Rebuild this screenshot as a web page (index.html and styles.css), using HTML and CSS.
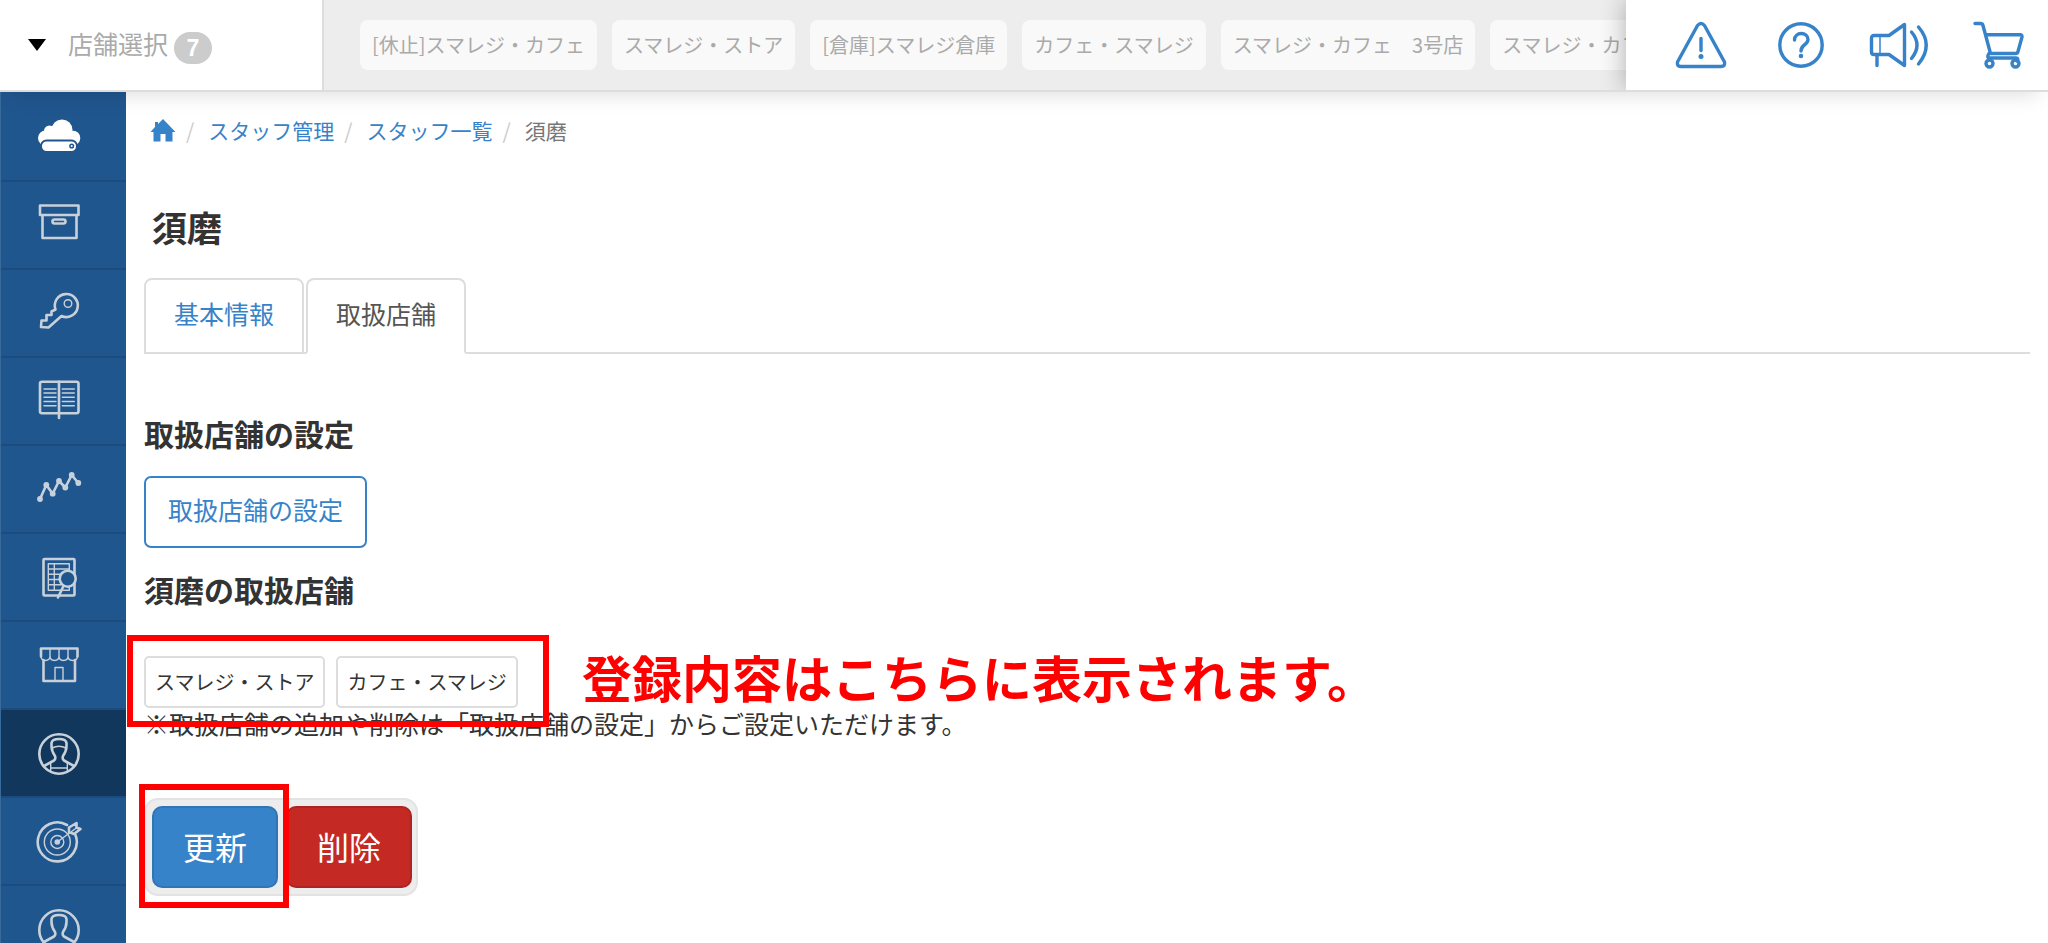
FILE: index.html
```html
<!DOCTYPE html>
<html lang="ja">
<head>
    <meta charset="UTF-8">
    <meta name="viewport" content="width=device-width, initial-scale=1.0">
    <title>須磨 - スタッフ管理</title>
    <link rel="stylesheet" href="styles.css">
</head>
<body>
    <header class="topbar">
        <button type="button" class="store-select">
            <span class="caret"></span>
            <span class="store-label">店舗選択</span>
            <span class="count">7</span>
        </button>
        <div class="store-strip">
            <span class="store-chip">[休止]スマレジ・カフェ</span>
            <span class="store-chip">スマレジ・ストア</span>
            <span class="store-chip">[倉庫]スマレジ倉庫</span>
            <span class="store-chip">カフェ・スマレジ</span>
            <span class="store-chip">スマレジ・カフェ　3号店</span>
            <span class="store-chip">スマレジ・カフェ</span>
        </div>
        <nav class="tools">
            <a href="#alerts" aria-label="お知らせ">
                <svg viewBox="0 0 60 50"><path d="M26.500 5.500Q30 1.500 33.500 5.500L53.500 42Q54.500 46.500 50 46.500H10Q5.500 46.500 6.500 42Z"/><path d="M30 18.500v12"/><circle class="dot" cx="30" cy="36.500" r="2.500"/></svg>
            </a>
            <a href="#help" aria-label="ヘルプ">
                <svg viewBox="0 0 60 50"><circle cx="30" cy="25" r="21.200"/><path d="M23.500 20C23.500 11.500 37 11.500 37 19.500C37 25 30 24.500 30 31"/><circle class="dot" cx="30" cy="36" r="2.300"/></svg>
            </a>
            <a href="#news" aria-label="ニュース">
                <svg viewBox="0 0 60 50"><path d="M18 15.500H3Q0.500 15.500 0.500 18V32Q0.500 34.500 3 34.500H18L33.500 45.500V4.500Z"/><path class="thin" d="M9 16v18"/><path d="M6 35v10.500M40.500 12Q51.500 25 40.500 38.500M47.500 7Q63 25 47.500 44"/></svg>
            </a>
            <a href="#cart" aria-label="カート">
                <svg viewBox="0 0 60 50"><path d="M4 3.500H9.500Q11.500 3.500 12 5.500L19.500 33.500H44.500Q46.500 33.500 47 31.500L51 17Q51.500 14.800 49 14.800H15"/><path d="M18 33.500Q15 38 19 38H45Q48 38 46 41"/><circle cx="18.500" cy="43.500" r="3.500"/><circle cx="44.500" cy="43.500" r="3.500"/></svg>
            </a>
        </nav>
    </header>

    <div class="layout">
        <nav class="sidebar">
            <ul>
                <li><a href="#cloud" aria-label="ホーム">
                    <svg viewBox="0 0 48 48"><g class="solid"><circle cx="27" cy="17" r="10.500"/><circle cx="14.500" cy="18" r="5.500"/><circle cx="10.500" cy="25" r="7.500"/><circle cx="38" cy="25" r="7.300"/><path d="M8 18H40L43 31H5Z"/></g><rect class="drive" x="6" y="27.500" width="36" height="11.500" rx="5.500"/><circle class="lamp" cx="36.700" cy="33" r="1.800"/></svg>
                </a></li>
                <li><a href="#items" aria-label="商品">
                    <svg viewBox="0 0 48 48"><path d="M5 4.500H43.500V14H5ZM7.500 14V37H41.500V14"/><rect x="17.500" y="18.500" width="13" height="4" rx="2"/></svg>
                </a></li>
                <li><a href="#keys" aria-label="権限">
                    <svg viewBox="0 0 48 48"><path d="M20.500 20.500A11.500 11.500 0 1 1 26.500 27L13.500 38.500L6 38L6.500 31.500H11.500V26H16.500V22.500Z"/><circle class="thin" cx="33" cy="14.500" r="3.800"/></svg>
                </a></li>
                <li><a href="#ledger" aria-label="台帳">
                    <svg viewBox="0 0 48 48"><rect x="5" y="4.800" width="38.500" height="31.500" rx="2"/><path d="M24 4.800V41"/><path class="thin" d="M9 12H21M9 16H21M9 20.300H21M9 24.500H21M9 28.700H21M27.300 12H39.300M27.300 16H39.300M27.300 20.300H39.300M27.300 24.500H39.300M27.300 28.700H39.300"/></svg>
                </a></li>
                <li><a href="#sales" aria-label="売上">
                    <svg viewBox="0 0 48 48"><path d="M5 34L11.300 20L17.700 28.700L24 16L30.300 22.500L36.700 10L43.300 18"/><g class="solid"><circle cx="5" cy="34" r="2.900"/><circle cx="11.300" cy="20" r="2.900"/><circle cx="17.700" cy="28.700" r="2.900"/><circle cx="24" cy="16" r="2.900"/><circle cx="30.300" cy="22.500" r="2.900"/><circle cx="36.700" cy="10" r="2.900"/><circle cx="43.300" cy="18" r="2.900"/></g></svg>
                </a></li>
                <li><a href="#reports" aria-label="帳票">
                    <svg viewBox="0 0 48 48"><rect x="8.500" y="6" width="31" height="36.500" rx="1"/><path class="thin" d="M34.300 17V10.700H13.300V37.300H34.300V33M13.300 16H34.300M13.300 21.300H27M13.300 26.500H25M13.300 31.700H26M19.300 10.700V37.300"/><circle class="lens" cx="32.700" cy="25.700" r="8"/><path d="M28.500 33L23 44.500"/></svg>
                </a></li>
                <li><a href="#stores" aria-label="店舗">
                    <svg viewBox="0 0 48 48"><path d="M6 7.500H42.500V15.500M6 7.500V15.500M8.500 19V40H40V19"/><path class="thin" d="M6 15Q6 19.500 10.500 19.500T15 15Q15 19.500 19.500 19.500T24 15Q24 19.500 28.500 19.500T33 15Q33 19.500 37.700 19.500T42.500 15M15 8V15M24 8V15M33 8V15M20 40V26.500H28V40"/></svg>
                </a></li>
                <li class="active"><a href="#staff" aria-label="スタッフ">
                    <svg viewBox="0 0 48 48"><circle cx="24" cy="25" r="19.700"/><path d="M9 37L19 31.500Q21 30 20 27Q16.500 22 16.500 17V14Q17 10 24 10T31.500 14V17Q31.500 22 28 27Q27 30 29 31.500L39 37"/><path class="thin" d="M17 19Q24 15.500 31 19M15.700 33.500V42.500M32.300 33.500V42.500M15.700 39H32.300"/></svg>
                </a></li>
                <li><a href="#target" aria-label="目標">
                    <svg viewBox="0 0 48 48"><path d="M32 8A19.500 19.500 0 1 0 40.500 18"/><circle class="thin" cx="22.300" cy="25" r="13"/><circle class="thin" cx="22.300" cy="25" r="6.500"/><circle class="solid" cx="22.300" cy="25" r="2.800"/><path class="thin" d="M22.300 25L42 10.500"/><path d="M34 15V10.500L41.500 6V10.500L45.500 12L39 17Z"/></svg>
                </a></li>
                <li><a href="#members" aria-label="会員">
                    <svg viewBox="0 0 48 48"><circle cx="24" cy="25" r="19.700"/><path d="M9 37L19 31.500Q21 30 20 27Q16.500 22 16.500 17V14Q17 10 24 10T31.500 14V17Q31.500 22 28 27Q27 30 29 31.500L39 37"/></svg>
                </a></li>
            </ul>
        </nav>

        <main class="content">
            <ol class="breadcrumb">
                <li><a href="#home" aria-label="ホーム"><svg class="home" viewBox="0 0 26 24"><path d="M13 1L25.500 14H22.500V23.500H15.500V16H10.500V23.500H3.500V14H0.500L5 9V4H8V6Z"/></svg></a></li>
                <li><a href="#staff">スタッフ管理</a></li>
                <li><a href="#staff-list">スタッフ一覧</a></li>
                <li>須磨</li>
            </ol>

            <h1>須磨</h1>

            <ul class="tabs">
                <li><a href="#basic">基本情報</a></li>
                <li><a href="#handled" class="current">取扱店舗</a></li>
            </ul>

            <h2>取扱店舗の設定</h2>
            <button type="button" class="btn-outline">取扱店舗の設定</button>

            <h2 class="second">須磨の取扱店舗</h2>
            <div class="handled">
                <span class="tag">スマレジ・ストア</span>
                <span class="tag">カフェ・スマレジ</span>
                <div class="mark mark-stores"></div>
                <strong class="callout">登録内容はこちらに表示されます。</strong>
            </div>
            <p class="note">※取扱店舗の追加や削除は「取扱店舗の設定」からご設定いただけます。</p>

            <div class="actions">
                <button type="submit" class="btn btn-update">更新</button>
                <button type="button" class="btn btn-delete">削除</button>
                <div class="mark mark-update"></div>
            </div>
        </main>
    </div>
</body>
</html>
```
FILE: styles.css
```css
* {
    margin: 0;
    padding: 0;
    box-sizing: border-box;
}

body {
    display: flex;
    flex-direction: column;
    height: 100vh;
    overflow: hidden;
    background: #fff;
    color: #333;
    font-family: "Noto Sans CJK JP", sans-serif;
    font-size: 25px;
}

button {
    font: inherit;
    cursor: pointer;
}

a {
    color: #3683c9;
    text-decoration: none;
}

ul,
ol {
    list-style: none;
}

svg {
    display: block;
    fill: none;
    stroke: currentColor;
    stroke-linecap: round;
    stroke-linejoin: round;
}

/* Top bar */
.topbar {
    display: flex;
    flex-shrink: 0;
    height: 92px;
    background: #ededed;
    border-bottom: 2px solid #ddd;
    box-shadow: 0 12px 20px -10px rgba(0, 0, 0, 0.14);
    position: relative;
    z-index: 10;
}

.store-select {
    display: flex;
    align-items: center;
    flex-shrink: 0;
    width: 324px;
    padding-left: 28px;
    background: #fff;
    border: 0;
    border-right: 2px solid #ddd;
    color: #aaa;
}

.caret {
    margin-right: 22px;
    border: 9px solid transparent;
    border-top: 12px solid #000;
    border-bottom: 0;
}

.store-label {
    padding-bottom: 4px;
}

.count {
    width: 38px;
    margin: 5px 0 0 6px;
    background: #ccc;
    border-radius: 16px;
    color: #fff;
    font-family: "Liberation Sans", sans-serif;
    font-size: 23px;
    font-weight: bold;
    line-height: 32px;
}

.store-strip {
    display: flex;
    flex: 1;
    align-items: center;
    gap: 15px;
    min-width: 0;
    padding-left: 36px;
    overflow: hidden;
}

.store-chip {
    flex-shrink: 0;
    padding: 0 12px;
    background: #f9f9f9;
    border-radius: 8px;
    color: #aaa;
    font-size: 20px;
    line-height: 50px;
    white-space: nowrap;
}

.tools {
    display: flex;
    flex-shrink: 0;
    align-items: center;
    gap: 40px;
    padding: 0 17px 0 45px;
    background: #fff;
    box-shadow: 0 0 24px rgba(0, 0, 0, 0.3);
    clip-path: inset(0 0 0 -30px);
}

.tools svg {
    width: 60px;
    height: 50px;
    overflow: visible;
    stroke-width: 3.4;
}

.tools .thin {
    stroke-width: 1.5;
}

.tools .dot {
    fill: currentColor;
    stroke: none;
}

.layout {
    display: flex;
    flex: 1;
    min-height: 0;
}

/* Sidebar */
.sidebar {
    flex-shrink: 0;
    width: 126px;
    padding-top: 2px;
    background: #20568e;
    border-left: 1px solid #396a9c;
    overflow: hidden;
}

.sidebar li {
    height: 88px;
    border-bottom: 2px solid #1c4b7e;
}

.sidebar .active {
    background: #12375c;
}

.sidebar a {
    display: flex;
    align-items: center;
    height: 100%;
    padding-left: 34px;
    color: #c8d1da;
}

.sidebar li:first-child a {
    color: #fff;
}

.sidebar svg {
    width: 48px;
    height: 48px;
    stroke-width: 2.6;
}

.sidebar .thin {
    stroke-width: 1.4;
}

.sidebar .solid {
    fill: currentColor;
    stroke: none;
}

.sidebar .drive {
    fill: currentColor;
    stroke: #20568e;
    stroke-width: 2;
}

.sidebar .lamp {
    stroke: #20568e;
    stroke-width: 1.5;
}

.sidebar .lens {
    fill: #20568e;
}

/* Main content */
.content {
    flex: 1;
    min-width: 0;
    padding: 22px 18px 0;
}

.breadcrumb {
    display: flex;
    align-items: center;
    padding-left: 6px;
    color: #777;
    font-size: 21px;
    line-height: 32px;
}

.breadcrumb li {
    display: flex;
    align-items: center;
}

.breadcrumb li + li::before {
    content: "/";
    padding: 0 14px 0 10px;
    color: #ccc;
}

.home {
    width: 26px;
    height: 24px;
    fill: currentColor;
    stroke: none;
}

h1 {
    margin: 61px 0 31px;
    padding-left: 8px;
    font-size: 35px;
    line-height: 40px;
}

.tabs {
    display: flex;
    gap: 2px;
    border-bottom: 2px solid #ddd;
}

.tabs a {
    display: block;
    margin-bottom: -2px;
    padding: 14px 28px 20px;
    border: 2px solid #ddd;
    border-radius: 8px 8px 0 0;
    line-height: 38px;
}

.tabs .current {
    border-bottom-color: #fff;
    color: #555;
}

h2 {
    margin: 59px 0 23px;
    font-size: 30px;
    line-height: 40px;
}

h2.second {
    margin: 21px 0 47px;
}

.btn-outline {
    display: block;
    padding: 0 22px 6px;
    background: #fff;
    border: 2px solid #3683c9;
    border-radius: 7px;
    color: #3683c9;
    line-height: 62px;
}

.handled {
    display: flex;
    align-items: center;
    gap: 11px;
    position: relative;
}

.tag {
    padding: 0 9px;
    border: 2px solid #ddd;
    border-radius: 5px;
    font-size: 20px;
    line-height: 48px;
}

.note {
    line-height: 30px;
}

.actions {
    display: flex;
    gap: 8px;
    width: fit-content;
    margin-top: 60px;
    padding: 6px 4px 6px 6px;
    background: #ededed;
    border: 2px solid #e3e3e3;
    border-radius: 14px;
    position: relative;
}

.btn {
    width: 126px;
    padding-bottom: 2px;
    border: 2px solid;
    border-radius: 10px;
    color: #fff;
    font-size: 32px;
    line-height: 76px;
}

.btn-update {
    background: #3683c9;
    border-color: #3075b4;
}

.btn-delete {
    background: #c52924;
    border-color: #ae2420;
}

/* Red marks drawn over the page */
.mark {
    position: absolute;
    border: 6px solid #f00;
    pointer-events: none;
}

.mark-stores {
    top: -21px;
    left: -17px;
    width: 422px;
    height: 92px;
}

.mark-update {
    top: -16px;
    left: -7px;
    width: 150px;
    height: 124px;
}

.callout {
    position: absolute;
    top: -10px;
    left: 438px;
    color: #f00;
    font-size: 50px;
    line-height: 60px;
    white-space: nowrap;
}
```
